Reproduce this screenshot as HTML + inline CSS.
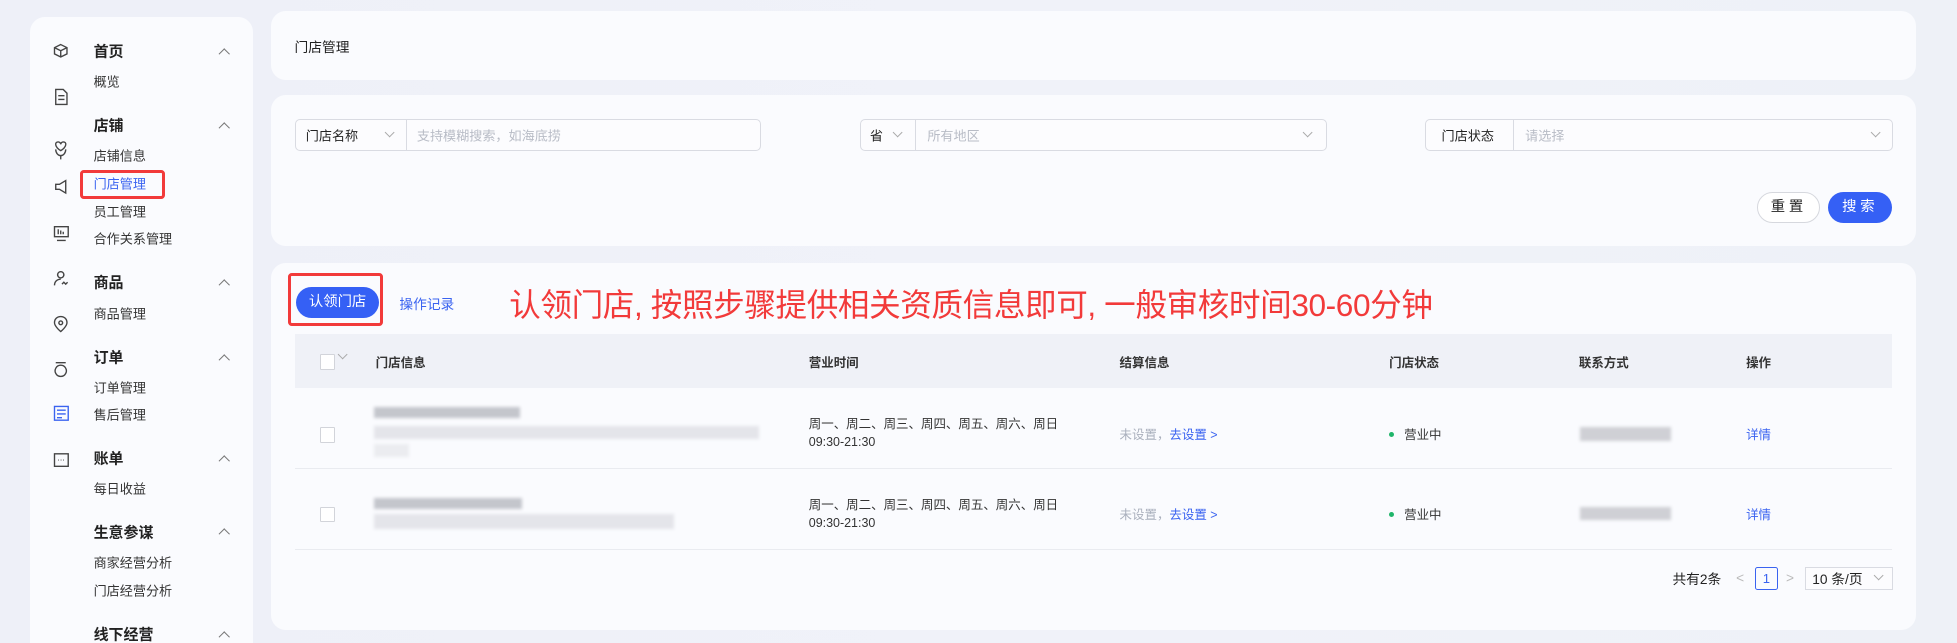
<!DOCTYPE html>
<html><head><meta charset="utf-8"><style>
html,body{margin:0;padding:0;width:1957px;height:643px;overflow:hidden;background:#eef1f8;}
#w{zoom:1.2481;position:relative;width:1568px;height:516px;background:linear-gradient(90deg,#eef0f8,#f0f2f9 60%,#eef1f7);font-family:"Liberation Sans","Noto Sans CJK SC",sans-serif;color:#333;font-size:10.5px;}
.a{position:absolute;white-space:nowrap;}
.card{position:absolute;background:#fafbfe;border-radius:12px;}
.t{position:absolute;transform:translateY(-50%);white-space:nowrap;}
.h{font-size:12px;font-weight:bold;color:#222;}
.chev{position:absolute;width:6px;height:6px;border-left:1px solid #777;border-top:1px solid #777;transform:rotate(45deg);}
.dn{position:absolute;width:5px;height:5px;border-right:1px solid #aaa;border-bottom:1px solid #aaa;transform:rotate(45deg);}
.box{position:absolute;border:1px solid #d9dbe2;border-radius:4px;background:#fcfcfe;}
.ph{color:#b8bcc6;}
.cb{position:absolute;width:11px;height:11px;border:1px solid #d2d4da;background:#fff;border-radius:1px;}
.blur{position:absolute;filter:blur(1.2px);}
.th{font-weight:bold;color:#333;font-size:10px}
</style></head><body><div id="w">
<div class="card" style="left:24px;top:14px;width:179px;height:520px;"></div>
<svg class="a" style="left:42px;top:34px" width="14" height="360" viewBox="0 0 14 360" fill="none" stroke="#444" stroke-width="1.1">
<path d="M7 2l5 2.5v5L7 12 2 9.5v-5z M2 4.5L7 7l5-2.5 M7 7v5"/>
<path d="M3 38h6l3 3v9H3z M5 43h5 M5 46h5"/>
<path d="M7 87c-5-3-5-7-2-7 1 0 2 1 2 2 0-1 1-2 2-2 3 0 3 4-2 7z M3 86c0 3 2 5 4 5s4-2 4-5 M7 91v3"/>
<path d="M3 114h3l5-3v10l-5-3H3z"/>
<path d="M2 148h11v8H2z M4 159h7 M5 150v4 M7 151v3 M9 152v2"/>
<path d="M7 184a2.5 2.5 0 1 0 0.01 0z M2 195c0-3 2-5 5-5 M8 194l1.5-1.5 1.5 1.5 1.5-1.5"/>
<path d="M7 220c-3 0-5 2-5 5 0 3 5 7 5 7s5-4 5-7c0-3-2-5-5-5z M7 223.5a1.5 1.5 0 1 0 0.01 0z"/>
<path d="M3 257h8 M7 259a4.5 4.5 0 1 0 0.01 0z"/>
<path d="M2 292h11v11H2z M4 295h7 M4 298h7 M4 301h4" stroke="#3a63f0"/>
<path d="M2 330h11v10H2z M5 335h0.5 M7 335h0.5 M9 335h0.5"/>
</svg>
<div class="t h" style="left:75px;top:41px">首页</div><div class="chev" style="left:176px;top:40px"></div>
<div class="t" style="left:75px;top:65px">概览</div>
<div class="t h" style="left:75px;top:100px">店铺</div><div class="chev" style="left:176px;top:99px"></div>
<div class="t" style="left:75px;top:124px">店铺信息</div>
<div class="t" style="left:75px;top:147px;color:#3a63f0">门店管理</div>
<div class="a" style="left:64px;top:136px;width:63px;height:19px;border:2.5px solid #f23a3a;border-radius:3px;"></div>
<div class="t" style="left:75px;top:169px">员工管理</div>
<div class="t" style="left:75px;top:191px">合作关系管理</div>
<div class="t h" style="left:75px;top:226px">商品</div><div class="chev" style="left:176px;top:225px"></div>
<div class="t" style="left:75px;top:251px">商品管理</div>
<div class="t h" style="left:75px;top:286px">订单</div><div class="chev" style="left:176px;top:285px"></div>
<div class="t" style="left:75px;top:310px">订单管理</div>
<div class="t" style="left:75px;top:332px">售后管理</div>
<div class="t h" style="left:75px;top:367px">账单</div><div class="chev" style="left:176px;top:366px"></div>
<div class="t" style="left:75px;top:391px">每日收益</div>
<div class="t h" style="left:75px;top:426px">生意参谋</div><div class="chev" style="left:176px;top:425px"></div>
<div class="t" style="left:75px;top:450px">商家经营分析</div>
<div class="t" style="left:75px;top:473px">门店经营分析</div>
<div class="t h" style="left:75px;top:508px">线下经营</div><div class="chev" style="left:176px;top:507px"></div>
<div class="card" style="left:217px;top:9px;width:1318px;height:55px;"></div>
<div class="t" style="left:236px;top:37px;font-size:11px;color:#222">门店管理</div>
<div class="card" style="left:217px;top:76px;width:1318px;height:121px;"></div>
<div class="box" style="left:236px;top:95px;width:372px;height:24px;"></div>
<div class="a" style="left:325px;top:96px;width:1px;height:24px;background:#d9dbe2"></div>
<div class="t" style="left:245px;top:108px;color:#222">门店名称</div><div class="dn" style="left:309px;top:103px"></div>
<div class="t ph" style="left:334px;top:108px">支持模糊搜索，如海底捞</div>
<div class="box" style="left:689px;top:95px;width:373px;height:24px;"></div>
<div class="a" style="left:733px;top:96px;width:1px;height:24px;background:#d9dbe2"></div>
<div class="t" style="left:697px;top:108px;color:#222">省</div><div class="dn" style="left:716px;top:103px"></div>
<div class="t ph" style="left:743px;top:108px">所有地区</div><div class="dn" style="left:1045px;top:103px"></div>
<div class="box" style="left:1142px;top:95px;width:373px;height:24px;"></div>
<div class="a" style="left:1212px;top:96px;width:1px;height:24px;background:#d9dbe2"></div>
<div class="t" style="left:1155px;top:108px;color:#222">门店状态</div>
<div class="t ph" style="left:1222px;top:108px">请选择</div><div class="dn" style="left:1500px;top:103px"></div>
<div class="a" style="left:1408px;top:154px;width:49px;height:23px;border:1px solid #d6d8de;border-radius:13px;background:#fff;text-align:center;line-height:23px;font-size:11.5px;color:#222;letter-spacing:3px">重置</div>
<div class="a" style="left:1465px;top:154px;width:51px;height:25px;border-radius:13px;background:#3560f5;text-align:center;line-height:25px;font-size:11.5px;color:#fff;letter-spacing:3px">搜索</div>
<div class="card" style="left:217px;top:211px;width:1318px;height:294px;"></div>
<div class="a" style="left:237px;top:230px;width:67px;height:25px;border-radius:13px;background:#3560f5;color:#fff;text-align:center;line-height:25px;font-size:11.5px">认领门店</div>
<div class="a" style="left:231px;top:219px;width:71px;height:37px;border:2.5px solid #f23a3a;border-radius:3px;"></div>
<div class="t" style="left:320px;top:243px;color:#3a63f0;font-size:11px">操作记录</div>
<div class="t" style="left:408px;top:243px;color:#f23a3a;font-size:25.3px;letter-spacing:-0.3px">认领门店, 按照步骤提供相关资质信息即可, 一般审核时间30-60分钟</div>
<div class="a" style="left:236px;top:268px;width:1280px;height:43px;background:#eff1f7"></div>
<div class="cb" style="left:256px;top:284px"></div><div class="dn" style="left:272px;top:281px"></div>
<div class="t th" style="left:301px;top:290px">门店信息</div>
<div class="t th" style="left:648px;top:290px">营业时间</div>
<div class="t th" style="left:897px;top:290px">结算信息</div>
<div class="t th" style="left:1113px;top:290px">门店状态</div>
<div class="t th" style="left:1265px;top:290px">联系方式</div>
<div class="t th" style="left:1399px;top:290px">操作</div>
<div class="a" style="left:236px;top:375px;width:1280px;height:1px;background:#e9ebf0"></div>
<div class="a" style="left:236px;top:440px;width:1280px;height:1px;background:#e9ebf0"></div>
<div class="cb" style="left:256px;top:342px"></div>
<div class="blur" style="left:300px;top:326px;width:117px;height:9px;background:#c4c6cc"></div>
<div class="blur" style="left:300px;top:341px;width:308px;height:11px;background:#e4e5ea"></div>
<div class="blur" style="left:300px;top:356px;width:28px;height:10px;background:#ebecf0"></div>
<div class="t" style="left:648px;top:339px;font-size:10px">周一、周二、周三、周四、周五、周六、周日</div>
<div class="t" style="left:648px;top:354px;font-size:10px">09:30-21:30</div>
<div class="t" style="left:897px;top:348px;font-size:10px;color:#aab0bd">未设置，<span style="color:#3a63f0">去设置 &gt;</span></div>
<div class="a" style="left:1113px;top:346px;width:4px;height:4px;border-radius:50%;background:#1fb56a"></div>
<div class="t" style="left:1125px;top:348px;font-size:10px">营业中</div>
<div class="blur" style="left:1266px;top:342px;width:73px;height:11px;background:#cfd0d5"></div>
<div class="t" style="left:1399px;top:348px;font-size:10px;color:#3a63f0">详情</div>
<div class="cb" style="left:256px;top:406px"></div>
<div class="blur" style="left:300px;top:399px;width:118px;height:9px;background:#c4c6cc"></div>
<div class="blur" style="left:300px;top:412px;width:240px;height:12px;background:#e4e5ea"></div>
<div class="t" style="left:648px;top:404px;font-size:10px">周一、周二、周三、周四、周五、周六、周日</div>
<div class="t" style="left:648px;top:419px;font-size:10px">09:30-21:30</div>
<div class="t" style="left:897px;top:412px;font-size:10px;color:#aab0bd">未设置，<span style="color:#3a63f0">去设置 &gt;</span></div>
<div class="a" style="left:1113px;top:410px;width:4px;height:4px;border-radius:50%;background:#1fb56a"></div>
<div class="t" style="left:1125px;top:412px;font-size:10px">营业中</div>
<div class="blur" style="left:1266px;top:406px;width:73px;height:11px;background:#cfd0d5"></div>
<div class="t" style="left:1399px;top:412px;font-size:10px;color:#3a63f0">详情</div>
<div class="t" style="left:1340px;top:463px;font-size:11px;color:#222">共有2条</div>
<div class="t" style="left:1391px;top:463px;color:#bbb;font-size:11px">&lt;</div>
<div class="a" style="left:1406px;top:454px;width:17px;height:17px;border:1px solid #3a63f0;border-radius:2px;color:#3a63f0;text-align:center;line-height:17px;font-size:10.5px">1</div>
<div class="t" style="left:1431px;top:463px;color:#bbb;font-size:11px">&gt;</div>
<div class="a" style="left:1446px;top:454px;width:69px;height:17px;border:1px solid #d9dbe2;background:#fcfcfe"></div>
<div class="t" style="left:1452px;top:463px;font-size:11px;color:#222">10 条/页</div>
<div class="dn" style="left:1502px;top:458px"></div>
</div></body></html>
